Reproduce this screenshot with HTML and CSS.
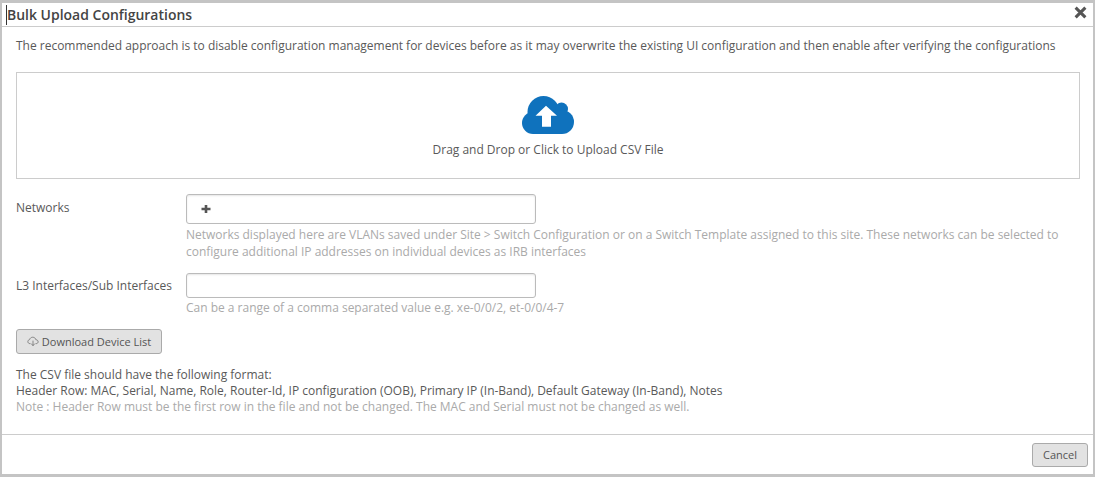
FILE: index.html
```html
<!DOCTYPE html>
<html lang="en">
<head>
<meta charset="utf-8">
<title>Bulk Upload Configurations</title>
<link rel="stylesheet" href="styles.css">
</head>
<body>
<div class="modal">
  <header class="head">
    <h1 class="title">Bulk Upload Configurations</h1>
    <svg class="close" viewBox="0 0 12 12" width="13" height="13" aria-label="Close"><path d="M1.500 1.500l9 9M10.500 1.500l-9 9" stroke="#555" stroke-width="2.800" fill="none"/></svg>
  </header>
  <main class="body">
    <p class="intro">The recommended approach is to disable configuration management for devices before as it may overwrite the existing UI configuration and then enable after verifying the configurations</p>
    <div class="drop">
      <svg class="cloud" viewBox="0 0 52 38" width="52" height="38"><g fill="#0f72bd"><circle cx="21.500" cy="16" r="16"/><circle cx="39.500" cy="13" r="6.500"/><circle cx="40" cy="26" r="12"/><circle cx="11" cy="27" r="11"/><rect x="11" y="20" width="29" height="18"/></g><path fill="#fff" d="M24 9.700L35 19.700H29V30.700H20V19.700H13.500Z"/></svg>
      <div class="drop-label">Drag and Drop or Click to Upload CSV File</div>
    </div>
    <div class="row row-net">
      <label class="label">Networks</label>
      <div class="field">
        <div class="input input-tall"><svg class="plus" viewBox="0 0 10 10" width="10" height="10"><path d="M5 1v8M0.500 5h9" stroke="#555" stroke-width="2.600"/></svg></div>
        <div class="hint">Networks displayed here are VLANs saved under Site &gt; Switch Configuration or on a Switch Template assigned to this site. These networks can be selected to configure additional IP addresses on individual devices as IRB interfaces</div>
      </div>
    </div>
    <div class="row row-l3">
      <label class="label label-l3">L3 Interfaces/Sub Interfaces</label>
      <div class="field">
        <div class="input"></div>
        <div class="hint hint-tight">Can be a range of a comma separated value e.g. xe-0/0/2, et-0/0/4-7</div>
      </div>
    </div>
    <button class="btn btn-dl" type="button"><svg class="dl" viewBox="0 0 14 12" width="12" height="11"><path d="M4 8.500H3.500C2 8.500 1 7.400 1 6.100 1 4.900 1.900 4 3 3.800 3.400 2.200 4.900 1 6.700 1 8.600 1 10.100 2.300 10.400 4 11.900 4 13 5 13 6.300 13 7.500 12 8.500 10.600 8.500H10M5 8.500L7 11 9 8.500M7 5V10.500" fill="none" stroke="#777" stroke-width="1"/></svg>Download Device List</button>
    <div class="format">
      <div>The CSV file should have the following format:</div>
      <div>Header Row: MAC, Serial, Name, Role, Router-Id, IP configuration (OOB), Primary IP (In-Band), Default Gateway (In-Band), Notes</div>
      <div class="note">Note : Header Row must be the first row in the file and not be changed. The MAC and Serial must not be changed as well.</div>
    </div>
  </main>
  <footer class="foot"><button class="btn btn-cancel" type="button">Cancel</button></footer>
</div>
</body>
</html>
```
FILE: styles.css
```css
* { box-sizing: border-box; }
html, body { height: 100%; }
body {
  margin: 0;
  padding: 3px 2px;
  background: #c4c4c4;
  font-family: "Open Sans", sans-serif;
  font-size: 11.99px;
  line-height: 16px;
  color: #595959;
  overflow: hidden;
}
.modal {
  height: 471px;
  background: #fff;
  display: flex;
  flex-direction: column;
}
.head {
  height: 24px;
  flex: none;
  display: flex;
  align-items: center;
  justify-content: space-between;
  border-bottom: 1px solid #ccc;
  padding: 0 6px 0 4px;
}
.title {
  margin: 0;
  font-size: 13.98px;
  font-weight: 600;
  line-height: 20px;
  height: 20px;
  color: #444;
  border-left: 1px solid #333;
}
.close { display: block; margin-top: -5px; }
.body { flex: 1; padding: 11px 13px 0 14px; }
.intro { margin: 0 0 18px; line-height: 16px; }
.drop {
  height: 107px;
  border: 1px solid #ccc;
  display: flex;
  flex-direction: column;
  align-items: center;
  padding-top: 23px;
}
.cloud { display: block; }
.drop-label { margin-top: 8px; }
.row { display: flex; }
.row-net { margin-top: 15px; }
.row-l3 { margin-top: 13px; }
.label { width: 170px; flex: none; padding-top: 6px; }
.label-l3 { padding-top: 5px; }
.field { flex: 1; }
.input {
  width: 350px;
  height: 25px;
  border: 1px solid #bbb;
  border-radius: 3px;
  box-shadow: inset 0 1px 2px rgba(0,0,0,.1);
  background: #fff;
  display: flex;
  align-items: center;
  padding-left: 14px;
}
.input-tall { height: 30px; }
.plus { display: block; }
.hint { color: #aaa; margin-top: 2px; line-height: 17px; }
.hint-tight { margin-top: 1px; }
.btn {
  font-family: inherit;
  font-size: 11px;
  line-height: 14px;
  color: #555;
  background: #e2e2e2;
  border: 1px solid #aaa;
  border-radius: 3px;
  padding: 0;
}
.btn-dl {
  display: flex;
  align-items: center;
  justify-content: center;
  gap: 3px;
  width: 146px;
  height: 25px;
  margin-top: 13px;
}
.dl { display: block; }
.format { margin-top: 13px; line-height: 16px; }
.note { color: #aaa; }
.foot {
  height: 40px;
  flex: none;
  border-top: 1px solid #ccc;
  display: flex;
  justify-content: flex-end;
  align-items: center;
  padding-right: 5px;
}
.btn-cancel { width: 56px; height: 24px; }
```
